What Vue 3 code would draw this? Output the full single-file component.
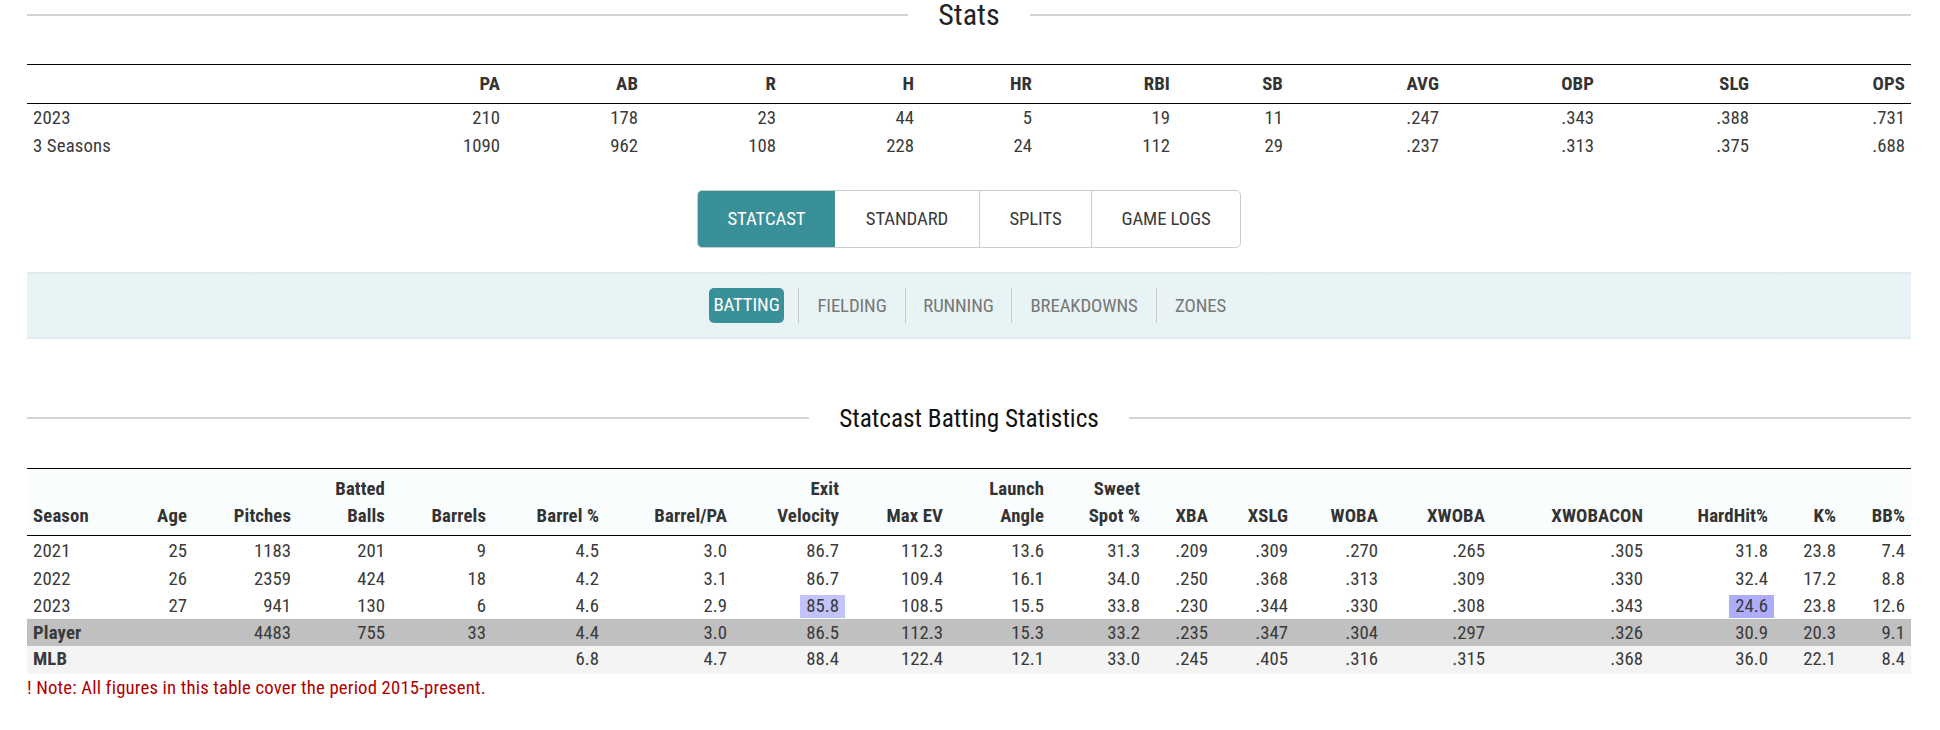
<template>
  <div class="page">
    <div class="section-title first">
      <span class="rule"></span>
      <h2 class="title-big">Stats</h2>
      <span class="rule"></span>
    </div>

    <table class="stats summary">
      <colgroup>
        <col v-for="w in summaryWidths" :key="w.id" :style="{ width: w.px + 'px' }" />
      </colgroup>
      <thead>
        <tr>
          <th></th>
          <th v-for="h in summaryHead" :key="h">{{ h }}</th>
        </tr>
      </thead>
      <tbody>
        <tr v-for="row in summaryRows" :key="row[0]">
          <td v-for="(c, i) in row" :key="i" :class="{ left: i === 0 }">{{ c }}</td>
        </tr>
      </tbody>
    </table>

    <div class="tabs-wrap">
      <div class="tabs">
        <div v-for="t in tabs" :key="t.name" class="tab" :class="{ active: t.active }" :style="{ width: t.w + 'px' }">{{ t.name }}</div>
      </div>
    </div>

    <div class="subbar">
      <div v-for="s in subTabs" :key="s.name" class="sub" :class="{ active: s.active }" :style="{ width: s.w + 'px' }">
        <span>{{ s.name }}</span>
      </div>
    </div>

    <div class="section-title second">
      <span class="rule"></span>
      <h2 class="title-small">Statcast Batting Statistics</h2>
      <span class="rule"></span>
    </div>

    <table class="stats statcast">
      <colgroup>
        <col v-for="w in statcastWidths" :key="w.id" :style="{ width: w.px + 'px' }" />
      </colgroup>
      <thead>
        <tr>
          <th v-for="(h, i) in statcastHead" :key="i" :class="{ left: i === 0 }">
            <template v-for="(line, j) in h" :key="j"><br v-if="j" />{{ line }}</template>
          </th>
        </tr>
      </thead>
      <tbody>
        <tr v-for="row in statcastRows" :key="row.cells[0]" :class="row.kind">
          <td v-for="(c, i) in row.cells" :key="i" :class="{ left: i === 0 }">
            <span v-if="row.hot && row.hot[i]" :class="row.hot[i]">{{ c }}</span>
            <template v-else>{{ c }}</template>
          </td>
        </tr>
      </tbody>
    </table>
    <div class="note">! Note: All figures in this table cover the period 2015-present.</div>
  </div>
</template>

<script setup>
function toWidths(edges) {
  return edges.slice(1).map((e, i) => ({ id: i, px: e - edges[i] }));
}

const summaryWidths = toWidths([27, 368, 506, 644, 782, 920, 1038, 1176, 1289, 1445, 1600, 1755, 1911]);
const summaryHead = ["PA", "AB", "R", "H", "HR", "RBI", "SB", "AVG", "OBP", "SLG", "OPS"];
const summaryRows = [
  ["2023", "210", "178", "23", "44", "5", "19", "11", ".247", ".343", ".388", ".731"],
  ["3 Seasons", "1090", "962", "108", "228", "24", "112", "29", ".237", ".313", ".375", ".688"],
];

const tabs = [
  { name: "STATCAST", w: 137, active: true },
  { name: "STANDARD", w: 144 },
  { name: "SPLITS", w: 112 },
  { name: "GAME LOGS", w: 149 },
];

const subTabs = [
  { name: "BATTING", w: 89, active: true },
  { name: "FIELDING", w: 107 },
  { name: "RUNNING", w: 106 },
  { name: "BREAKDOWNS", w: 145 },
  { name: "ZONES", w: 73 },
];

const statcastWidths = toWidths([27, 130, 193, 297, 391, 492, 605, 733, 845, 949, 1050, 1146, 1214, 1294, 1384, 1491, 1649, 1774, 1842, 1911]);
const statcastHead = [
  ["Season"], ["Age"], ["Pitches"], ["Batted", "Balls"], ["Barrels"], ["Barrel %"], ["Barrel/PA"],
  ["Exit", "Velocity"], ["Max EV"], ["Launch", "Angle"], ["Sweet", "Spot %"], ["XBA"], ["XSLG"],
  ["WOBA"], ["XWOBA"], ["XWOBACON"], ["HardHit%"], ["K%"], ["BB%"],
];
const statcastRows = [
  { cells: ["2021", "25", "1183", "201", "9", "4.5", "3.0", "86.7", "112.3", "13.6", "31.3", ".209", ".309", ".270", ".265", ".305", "31.8", "23.8", "7.4"] },
  { cells: ["2022", "26", "2359", "424", "18", "4.2", "3.1", "86.7", "109.4", "16.1", "34.0", ".250", ".368", ".313", ".309", ".330", "32.4", "17.2", "8.8"] },
  { cells: ["2023", "27", "941", "130", "6", "4.6", "2.9", "85.8", "108.5", "15.5", "33.8", ".230", ".344", ".330", ".308", ".343", "24.6", "23.8", "12.6"], hot: { 7: "hot-light", 16: "hot-dark" } },
  { kind: "player", cells: ["Player", "", "4483", "755", "33", "4.4", "3.0", "86.5", "112.3", "15.3", "33.2", ".235", ".347", ".304", ".297", ".326", "30.9", "20.3", "9.1"] },
  { kind: "mlb", cells: ["MLB", "", "", "", "", "6.8", "4.7", "88.4", "122.4", "12.1", "33.0", ".245", ".405", ".316", ".315", ".368", "36.0", "22.1", "8.4"] },
];
</script>

<style>
body {
  background: #fff;
}
</style>

<style scoped>
.page {
  width: 1884px;
  margin-left: 27px;
  font-family: Roboto, "Liberation Sans", sans-serif;
  font-stretch: 75%;
  font-size: 18.75px;
  color: #333;
}

.section-title {
  display: flex;
  align-items: center;
}

.section-title.first {
  height: 30px;
}

.section-title.second {
  height: 40px;
  margin-top: 59px;
}

.rule {
  flex: 1;
  height: 1.5px;
  background: #d3d3d3;
}

.title-big,
.title-small {
  margin: 0;
  font-weight: 400;
  line-height: 30px;
  color: #222;
}

.title-big {
  font-size: 30px;
  padding: 0 30px;
}

.title-small {
  font-size: 25.25px;
  padding: 1px 30px 0;
  color: #111;
}

.stats {
  border-collapse: collapse;
  table-layout: fixed;
  width: 1884px;
}

.stats th,
.stats td {
  padding: 0 6px;
  text-align: right;
  white-space: nowrap;
}

.stats td {
  color: #3a3a3a;
}

.stats .left {
  text-align: left;
  letter-spacing: 0.15px;
}

.stats th {
  font-weight: 700;
  vertical-align: bottom;
  letter-spacing: 0.1px;
}

.summary {
  margin-top: 34px;
  border-top: 1.5px solid #000;
}

.summary thead tr {
  border-bottom: 1.5px solid #000;
  height: 39px;
}

.summary th {
  vertical-align: middle;
}

.summary td {
  height: 27px;
  line-height: 27px;
  padding-top: 1px;
}

.tabs-wrap {
  display: flex;
  justify-content: center;
  margin-top: 30px;
}

.tabs {
  display: flex;
  box-sizing: border-box;
  height: 58px;
  border: 1.5px solid #ccc;
  border-radius: 5px;
  overflow: hidden;
  background: #fff;
  letter-spacing: -0.1px;
}

.tab {
  display: flex;
  box-sizing: border-box;
  align-items: center;
  justify-content: center;
  border-left: 1px solid #ccc;
  color: #3a3a3a;
}

.tab:first-child {
  border-left: none;
}

.tab.active {
  background: #3a9098;
  color: #fff;
}

.tab.active + .tab {
  border-left: none;
}

.subbar {
  display: flex;
  justify-content: center;
  align-items: center;
  height: 67px;
  margin-top: 24px;
  background: linear-gradient(#dee8ea, #e7f3f5 3px, #e7f3f5 calc(100% - 3px), #dee8ea);
  letter-spacing: -0.1px;
}

.sub {
  display: flex;
  box-sizing: border-box;
  justify-content: center;
  align-items: center;
  height: 35px;
  border-left: 1px solid #c8c8c8;
  color: #777;
}

.sub:first-child {
  border-left: none;
  justify-content: flex-start;
}

.sub:last-child {
  justify-content: flex-start;
  padding-left: 18px;
}

.sub.active span {
  display: block;
  width: 75px;
  line-height: 35px;
  text-align: center;
  border-radius: 5px;
  background: #3a9098;
  color: #fff;
}

.statcast {
  margin-top: 30px;
  border-top: 1.5px solid #000;
}

.statcast thead tr {
  border-bottom: 1.5px solid #000;
  background: #f9fdfe;
}

.statcast th {
  line-height: 27px;
  padding-top: 7px;
  padding-bottom: 5px;
}

.statcast td {
  box-sizing: border-box;
  height: 27px;
  line-height: 23px;
  padding-top: 2px;
  padding-bottom: 0;
}

.statcast tbody tr:first-child td {
  height: 29px;
}

.statcast tbody tr.mlb td {
  height: 28px;
  padding-top: 0;
}

.player {
  background: #c0c0c0;
}

.mlb {
  background: #f4f4f4;
}

.player td.left,
.mlb td.left {
  font-weight: 700;
}

.hot-light,
.hot-dark {
  display: inline-block;
  padding: 0 6px;
  margin-right: -6px;
}

.hot-light {
  background: #c3c3fb;
}

.hot-dark {
  background: #adadfb;
}

.note {
  color: #b00000;
  line-height: 28px;
  letter-spacing: 0.16px;
}
</style>
